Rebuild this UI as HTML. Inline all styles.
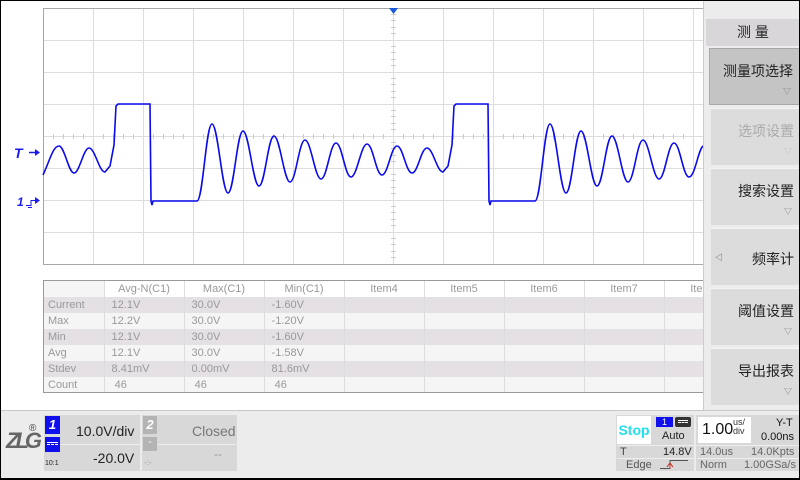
<!DOCTYPE html>
<html><head><meta charset="utf-8"><style>
*{margin:0;padding:0;box-sizing:border-box}
body{width:800px;height:480px;overflow:hidden;background:#fff;font-family:"Liberation Sans","Noto Sans CJK SC",sans-serif;position:relative}
.a{position:absolute}
.frame{left:0;top:0;width:800px;height:480px;border:1px solid #000;border-bottom:2px solid #000;pointer-events:none;z-index:9}
.menu{left:703px;top:0;width:97px;height:411px;background:#ececec}
.btn{position:absolute;left:8px;width:89px;height:57px;background:#dcdcdc;border-top:1px solid #f4f4f4;text-align:right;padding-right:6px;font-size:14px;color:#222}
.btn .t{position:absolute;right:6px;top:12px}
.btn .v{position:absolute;right:8px;top:37px;font-size:8px;color:#777}
table{border-collapse:collapse;font-size:11px;color:#999}
td{height:16px;padding:0 0 0 4px;border-right:1px solid #ddd;white-space:nowrap;overflow:hidden}
th{font-weight:normal;height:16px;border-right:1px solid #ddd;text-align:center}
tr.s td{background:#e4e0e4}
tr.l td{background:#f5f5f5}
.cell{background:#d8d8d8}
</style></head><body>
<svg class="a" style="left:0;top:0" width="800" height="280">
<rect x="43.5" y="8.5" width="660" height="256" fill="#fff" stroke="#a8a8a8"/>
<g stroke="#dddddd" stroke-width="1">
<path d="M93.5 9V264M143.5 9V264M193.5 9V264M243.5 9V264M293.5 9V264M343.5 9V264M393.5 9V264M443.5 9V264M493.5 9V264M543.5 9V264M593.5 9V264M643.5 9V264M693.5 9V264"/>
<path d="M44 40.5H703M44 72.5H703M44 104.5H703M44 136.5H703M44 168.5H703M44 200.5H703M44 232.5H703"/>
</g>
<g stroke="#ccc">
<path d="M53.5 134V139M63.5 134V139M73.5 134V139M83.5 134V139M103.5 134V139M113.5 134V139M123.5 134V139M133.5 134V139M153.5 134V139M163.5 134V139M173.5 134V139M183.5 134V139M203.5 134V139M213.5 134V139M223.5 134V139M233.5 134V139M253.5 134V139M263.5 134V139M273.5 134V139M283.5 134V139M303.5 134V139M313.5 134V139M323.5 134V139M333.5 134V139M353.5 134V139M363.5 134V139M373.5 134V139M383.5 134V139M403.5 134V139M413.5 134V139M423.5 134V139M433.5 134V139M453.5 134V139M463.5 134V139M473.5 134V139M483.5 134V139M503.5 134V139M513.5 134V139M523.5 134V139M533.5 134V139M553.5 134V139M563.5 134V139M573.5 134V139M583.5 134V139M603.5 134V139M613.5 134V139M623.5 134V139M633.5 134V139M653.5 134V139M663.5 134V139M673.5 134V139M683.5 134V139"/>
<path d="M391 14.5H396M391 20.5H396M391 27.5H396M391 33.5H396M391 46.5H396M391 52.5H396M391 59.5H396M391 65.5H396M391 78.5H396M391 84.5H396M391 91.5H396M391 97.5H396M391 110.5H396M391 116.5H396M391 123.5H396M391 129.5H396M391 142.5H396M391 148.5H396M391 155.5H396M391 161.5H396M391 174.5H396M391 180.5H396M391 187.5H396M391 193.5H396M391 206.5H396M391 212.5H396M391 219.5H396M391 225.5H396M391 238.5H396M391 244.5H396M391 251.5H396M391 257.5H396"/>
</g>
<path fill="none" stroke="#0a0aee" stroke-width="1.6" d="M43 175 C50 160 53 146 59 146 C64.5 146 68.5 173 74 173 C79.5 173 83.5 148 89 148 C95 148 99 172 105 172 L110 166 L114 145 L116 106 L118 104 L150 104 L151 201 L152 205 L153 201 L197 201 C203 201 206 124 212 124 C218 124 222 193 228 193 C234 193 237 131 243 131 C249 131 253 186 259 186 C265 186 268 136 274 136 C280 136 284 182 290 182 C296 182 299 140 305 140 C311 140 315 179 321 179 C327 179 330 143 336 143 C342 143 345 177 351 177 C357 177 361 144 367 144 C373 144 376 175 382 175 C388 175 391 146 397 146 C403 146 406 173 412 173 C418 173 421 148 427 148 C433 148 437 172 443 172 L448 166 L452 145 L454 106 L456 104 L488 104 L489 201 L490 205 L491 201 L535 201 C541 201 544 124 550 124 C556 124 560 193 566 193 C572 193 575 131 581 131 C587 131 591 186 597 186 C603 186 606 136 612 136 C618 136 622 182 628 182 C634 182 637 140 643 140 C649 140 653 179 659 179 C665 179 668 143 674 143 C680 143 683 177 689 177 C695 177 698 150 703 146"/>
<polygon points="389,8 398,8 393.5,14" fill="#1a5adc"/>
<text x="14" y="158" font-size="14" font-style="italic" font-weight="bold" fill="#1a1aee" font-family="Liberation Sans">T</text>
<path d="M29 152.5H36" stroke="#1a1aee" stroke-width="1.5"/><polygon points="35,149 40,152.5 35,156" fill="#1a1aee"/>
<text x="17" y="206" font-size="12" font-style="italic" font-weight="bold" fill="#1a1aee" font-family="Liberation Sans">1</text>
<path d="M26 205.5h5v-5h4M28 207.5h4" stroke="#1a1aee" stroke-width="1" fill="none"/><polygon points="35,197 40,200.5 35,204" fill="#1a1aee"/>
</svg>

<div class="a" style="left:43px;top:280px;width:661px;height:113px;border:1px solid #999;background:#fff;overflow:hidden">
<table style="width:700px;table-layout:fixed">
<colgroup><col style="width:60px"><col style="width:80px"><col style="width:80px"><col style="width:80px"><col style="width:80px"><col style="width:80px"><col style="width:80px"><col style="width:80px"><col style="width:80px"></colgroup>
<tr class="l"><th style="background:#f5f5f5"></th><th>Avg-N(C1)</th><th>Max(C1)</th><th>Min(C1)</th><th>Item4</th><th>Item5</th><th>Item6</th><th>Item7</th><th>Item8</th></tr>
<tr class="s"><td>Current</td><td>&nbsp;12.1V</td><td>&nbsp;30.0V</td><td>&nbsp;-1.60V</td><td></td><td></td><td></td><td></td><td></td></tr>
<tr class="l"><td>Max</td><td>&nbsp;12.2V</td><td>&nbsp;30.0V</td><td>&nbsp;-1.20V</td><td></td><td></td><td></td><td></td><td></td></tr>
<tr class="s"><td>Min</td><td>&nbsp;12.1V</td><td>&nbsp;30.0V</td><td>&nbsp;-1.60V</td><td></td><td></td><td></td><td></td><td></td></tr>
<tr class="l"><td>Avg</td><td>&nbsp;12.1V</td><td>&nbsp;30.0V</td><td>&nbsp;-1.58V</td><td></td><td></td><td></td><td></td><td></td></tr>
<tr class="s"><td>Stdev</td><td>&nbsp;8.41mV</td><td>&nbsp;0.00mV</td><td>&nbsp;81.6mV</td><td></td><td></td><td></td><td></td><td></td></tr>
<tr class="l"><td>Count</td><td>&nbsp;&nbsp;46</td><td>&nbsp;&nbsp;46</td><td>&nbsp;&nbsp;46</td><td></td><td></td><td></td><td></td><td></td></tr>
</table></div>

<div class="a menu">
<div class="a" style="left:0;top:0;width:1px;height:411px;background:#ccc"></div>
<div class="a" style="left:3px;top:19px;width:94px;height:27px;background:#d8d6d8;text-align:center;font-size:14px;line-height:27px;color:#222">测&nbsp;量</div>
<div class="btn" style="top:48px;left:6px;width:91px;background:#c4c4c4;border:1px solid #a8a8a8"><span class="t">测量项选择</span><span class="v">▽</span></div>
<div class="btn" style="top:108px;color:#aaa"><span class="t">选项设置</span><span class="v" style="color:#bbb">▽</span></div>
<div class="btn" style="top:168px"><span class="t">搜索设置</span><span class="v">▽</span></div>
<div class="btn" style="top:228px"><span class="t" style="top:20px">频率计</span><span style="position:absolute;left:4px;top:23px;font-size:8px;color:#555">◁</span></div>
<div class="btn" style="top:288px"><span class="t">阈值设置</span><span class="v">▽</span></div>
<div class="btn" style="top:348px"><span class="t">导出报表</span><span class="v">▽</span></div>
</div>

<div class="a" style="left:0;top:410px;width:800px;height:70px;background:#ececec;border-top:1px solid #c8c8c8"></div>
<div class="a" style="left:6px;top:428px;font-size:22px;font-style:italic;font-weight:bold;color:#666;letter-spacing:-4px">ZLG</div>
<div class="a" style="left:29px;top:423px;font-size:10px;color:#444">®</div>

<div class="a cell" style="left:44px;top:415px;width:96px;height:56px"></div>
<div class="a" style="left:45px;top:416px;width:15px;height:18px;background:#1010ee;color:#fff;font-weight:bold;font-style:italic;font-size:13px;text-align:center;line-height:18px">1</div>
<div class="a" style="left:45px;top:437px;width:15px;height:15px;background:#1010ee"><div style="margin:5px 2px;border-top:1px solid #fff;border-bottom:1px dashed #fff;height:3px"></div></div>
<div class="a" style="left:45px;top:460px;font-size:7px;color:#222">10:1</div>
<div class="a" style="left:76px;top:423px;font-size:14px;color:#222">10.0V/div</div>
<div class="a" style="left:61px;top:444px;width:79px;height:1px;background:#eee"></div>
<div class="a" style="left:93px;top:450px;font-size:14px;color:#222">-20.0V</div>

<div class="a cell" style="left:142px;top:415px;width:95px;height:56px"></div>
<div class="a" style="left:143px;top:416px;width:14px;height:18px;background:#b4b4b4;color:#fff;font-weight:bold;font-style:italic;font-size:13px;text-align:center;line-height:18px">2</div>
<div class="a" style="left:143px;top:437px;width:14px;height:14px;background:#b4b4b4;color:#fff;font-size:10px;text-align:center;line-height:12px">-</div>
<div class="a" style="left:144px;top:458px;font-size:8px;color:#999">-:-</div>
<div class="a" style="left:192px;top:423px;font-size:14px;color:#777">Closed</div>
<div class="a" style="left:158px;top:444px;width:78px;height:1px;background:#eee"></div>
<div class="a" style="left:214px;top:447px;font-size:12px;color:#999">--</div>

<div class="a cell" style="left:616px;top:415px;width:78px;height:56px"></div>
<div class="a" style="left:617px;top:416px;width:34px;height:28px;background:#fff;color:#22e0ee;font-weight:bold;font-size:14px;text-align:center;line-height:28px">Stop</div>
<div class="a" style="left:656px;top:417px;width:17px;height:10px;background:#1010ee;color:#fff;font-size:9px;text-align:center;line-height:10px">1</div>
<div class="a" style="left:675px;top:417px;width:16px;height:10px;background:#333;border-radius:2px"><div style="margin:3px 3px;border-top:1px solid #fff;border-bottom:1px dashed #fff;height:3px"></div></div>
<div class="a" style="left:662px;top:430px;font-size:11px;color:#222">Auto</div>
<div class="a" style="left:617px;top:445px;width:77px;height:1px;background:#eee"></div>
<div class="a" style="left:620px;top:446px;font-size:11px;color:#444">T</div>
<div class="a" style="left:663px;top:446px;font-size:11px;color:#222">14.8V</div>
<div class="a" style="left:617px;top:458px;width:77px;height:1px;background:#eee"></div>
<div class="a" style="left:626px;top:459px;font-size:11px;color:#555">Edge</div>
<svg class="a" style="left:660px;top:458px" width="30" height="12"><path d="M0 10.5H10V2.5H28" stroke="#555" fill="none"/><path d="M7 9L10 5L13 9M10 5V11" stroke="#c03020" fill="none"/></svg>

<div class="a cell" style="left:696px;top:415px;width:103px;height:56px"></div>
<div class="a" style="left:698px;top:417px;width:53px;height:26px;background:#fff"></div>
<div class="a" style="left:702px;top:421px;font-size:16px;color:#111">1.00</div>
<div class="a" style="left:733px;top:418px;font-size:9px;color:#333;line-height:9px">us/<br>div</div>
<div class="a" style="left:776px;top:417px;font-size:11px;color:#111">Y-T</div>
<div class="a" style="left:761px;top:431px;font-size:11px;color:#111">0.00ns</div>
<div class="a" style="left:697px;top:445px;width:102px;height:1px;background:#eee"></div>
<div class="a" style="left:700px;top:446px;font-size:11px;color:#666">14.0us</div>
<div class="a" style="left:751px;top:446px;font-size:11px;color:#666">14.0Kpts</div>
<div class="a" style="left:697px;top:458px;width:102px;height:1px;background:#eee"></div>
<div class="a" style="left:700px;top:459px;font-size:11px;color:#666">Norm</div>
<div class="a" style="left:744px;top:459px;font-size:11px;color:#666">1.00GSa/s</div>

<div class="a frame"></div>
</body></html>
